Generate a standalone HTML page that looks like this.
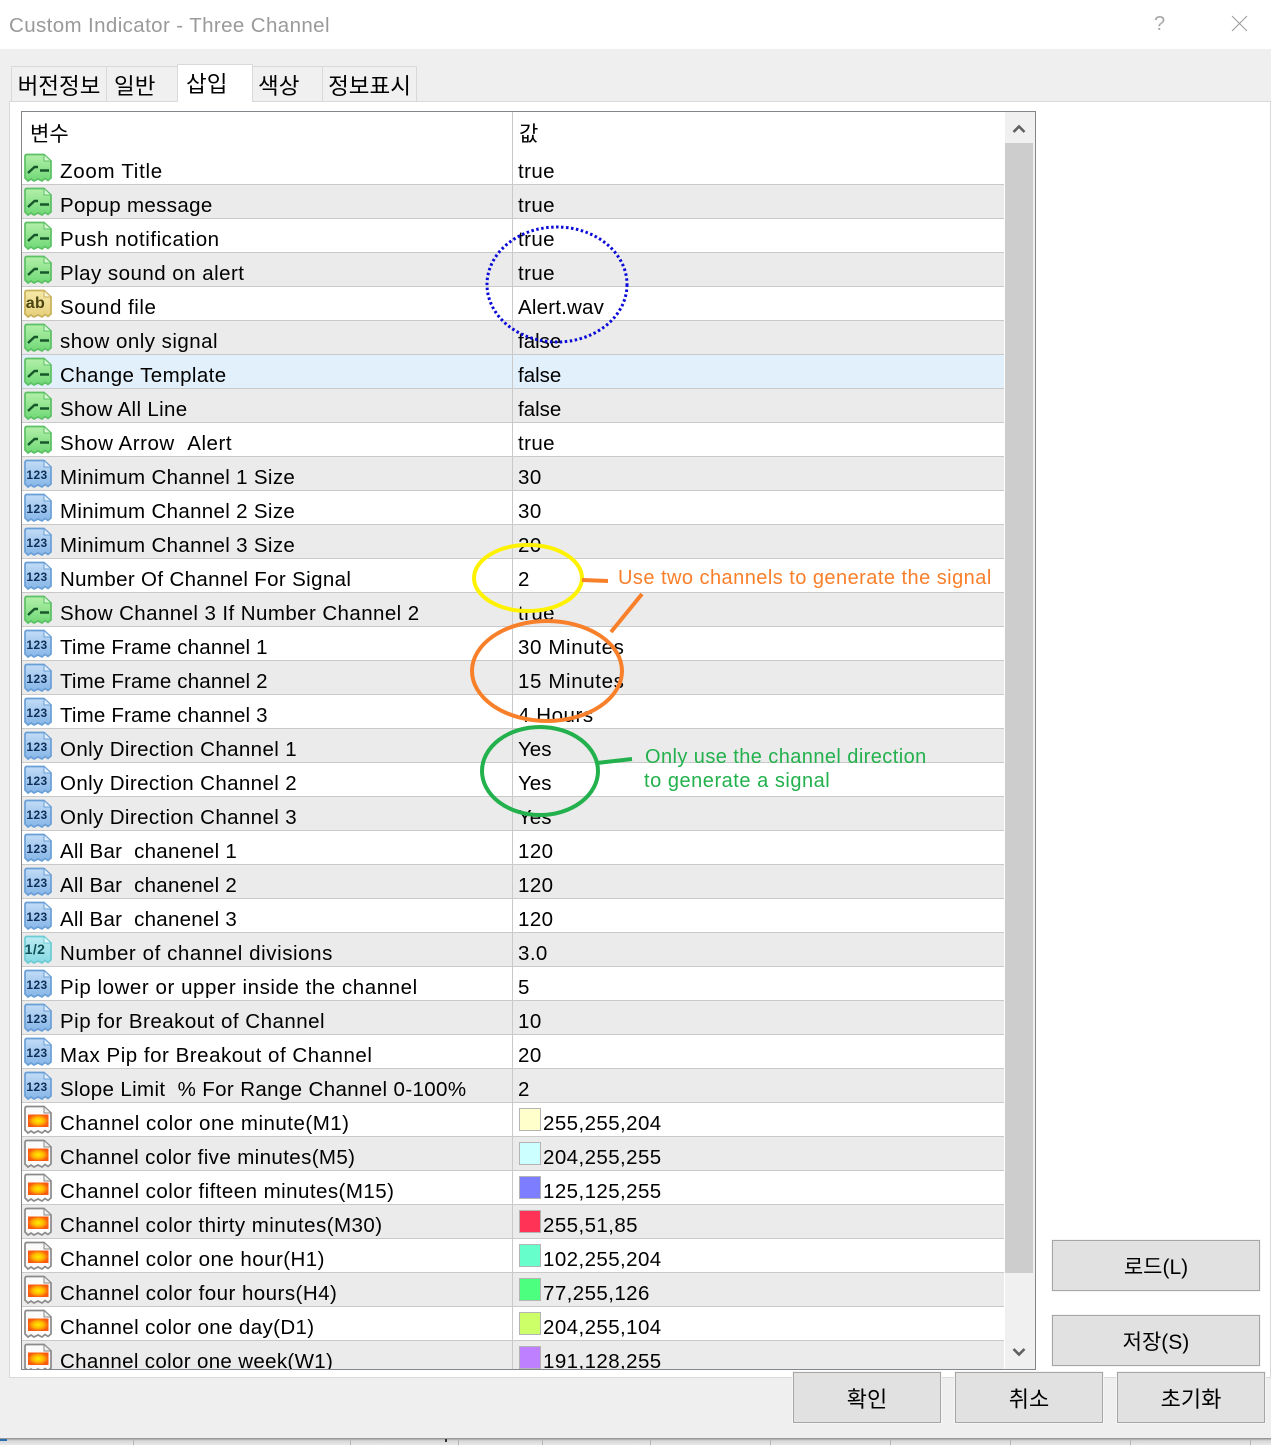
<!DOCTYPE html>
<html><head><meta charset="utf-8">
<style>
html,body{margin:0;padding:0;background:#fff}
body{width:1271px;height:1445px;position:relative;overflow:hidden;font-family:"Liberation Sans","Noto Sans CJK KR",sans-serif;color:#000}
.a{position:absolute}
.bg{left:0;top:49px;width:1271px;height:1389px;background:#efefef}
.shadow{left:0;top:1438px;width:1271px;height:7px;background:linear-gradient(#8a8a8a,#d8d8d8 40%,#e8e8e8)}
.tick{top:1440px;width:1px;height:5px;background:#b4b4b4}
.title{left:9px;top:13px;font-size:20.5px;line-height:26px;color:#9a9a9a;letter-spacing:.39px;white-space:nowrap}
.panel{left:9px;top:101px;width:1260px;height:1275px;background:#fff;border:1px solid #d9d9d9}
.tab{top:66px;height:35px;background:#f0f0f0;border:1px solid #d9d9d9;border-bottom:0;box-sizing:border-box;font-size:22.5px;line-height:40px;text-align:center;white-space:nowrap}
.tab.on{top:64px;height:38px;background:#fff;line-height:39px;z-index:2}
.grid{left:21px;top:111px;width:1013px;height:1257px;background:#fff;border:1px solid #82878c;overflow:hidden}
.hd{left:0;top:0;width:983px;height:39px;font-size:21px;line-height:46px}
.rows{left:0;top:39px;width:982px}
.r{position:relative;height:33px;border-bottom:1px solid #c9c9c9;background:#fff;font-size:20.5px;line-height:41px;white-space:nowrap;letter-spacing:.42px}
.r:nth-child(even){background:#ebebeb}
.r.sel{background:#e2f0fb}
.r svg{position:absolute;left:1px;top:2px;width:30px;height:30px}
.n{position:absolute;left:38px;top:0}
.v{position:absolute;left:496px;top:0}
.v.c{left:521px}
.sw{position:absolute;left:497px;top:5px;width:20px;height:21px;border:1px solid #b4b4b4}
.col{left:490px;top:0;width:1px;height:1257px;background:#c9c9c9}
.sb{left:983px;top:0;width:30px;height:1257px;background:#f0f0f0}
.th{left:0;top:31px;width:28px;height:1130px;background:#cdcdcd}
.btn{background:#e1e1e1;border:1px solid #a6a6a6;box-sizing:border-box;font-size:22px;text-align:center;line-height:54px;outline:1px solid #f5f5f5}
svg.o{position:absolute;left:0;top:0;width:1271px;height:1445px;z-index:5}
svg.o text{font-family:"Liberation Sans",sans-serif;font-size:20px;letter-spacing:.42px}
</style></head>
<body>
<svg width="0" height="0" style="position:absolute">
<defs>
<linearGradient id="gg" x1="0" y1="0" x2="0" y2="1"><stop offset="0" stop-color="#b4f0aa"/><stop offset="1" stop-color="#6fd876"/></linearGradient>
<linearGradient id="gb" x1="0" y1="0" x2="0" y2="1"><stop offset="0" stop-color="#c2dcf6"/><stop offset="1" stop-color="#86b6e8"/></linearGradient>
<linearGradient id="gy" x1="0" y1="0" x2="0" y2="1"><stop offset="0" stop-color="#f6e9a8"/><stop offset="1" stop-color="#e6d07c"/></linearGradient>
<linearGradient id="gt" x1="0" y1="0" x2="0" y2="1"><stop offset="0" stop-color="#bcecf2"/><stop offset="1" stop-color="#86dae2"/></linearGradient>
<radialGradient id="go"><stop offset="0" stop-color="#ffee00"/><stop offset=".55" stop-color="#ffb400"/><stop offset="1" stop-color="#f85a10"/></radialGradient>
<symbol id="g" viewBox="0 0 30 30"><path d="M2 3.500Q2 1.500 4 1.500H21L28 8V25L25 27.500 22 25.500 19 28 15 26 11 28 8 26 5 28 2 25Z" fill="url(#gg)" stroke="#5cc064" stroke-width="1.700"/><path d="M21 2V8H27.500" fill="#d8f7d2" stroke="#5cc064"/><path d="M5 20L11.500 14H15M17 17.500H26" fill="none" stroke="#17582a" stroke-width="2.400"/></symbol>
<symbol id="b" viewBox="0 0 30 30"><path d="M2 3.500Q2 1.500 4 1.500H21L28 8V25L25 27.500 22 25.500 19 28 15 26 11 28 8 26 5 28 2 25Z" fill="url(#gb)" stroke="#6a9fd6" stroke-width="1.700"/><path d="M21 2V8H27.500" fill="#e2effb" stroke="#6a9fd6"/><text x="14" y="20" text-anchor="middle" font-family="Liberation Sans" font-weight="700" font-size="12" fill="#0f2f58">123</text></symbol>
<symbol id="y" viewBox="0 0 30 30"><path d="M2 3.500Q2 1.500 4 1.500H21L28 8V25L25 27.500 22 25.500 19 28 15 26 11 28 8 26 5 28 2 25Z" fill="url(#gy)" stroke="#c9b05a" stroke-width="1.700"/><path d="M21 2V8H27.500" fill="#fbf5d8" stroke="#c9b05a"/><text x="12.500" y="19" text-anchor="middle" font-family="Liberation Sans" font-weight="700" font-size="16" fill="#4b4310">ab</text></symbol>
<symbol id="t" viewBox="0 0 30 30"><path d="M2 3.500Q2 1.500 4 1.500H21L28 8V25L25 27.500 22 25.500 19 28 15 26 11 28 8 26 5 28 2 25Z" fill="url(#gt)" stroke="#6ccbd3" stroke-width="1.700"/><path d="M21 2V8H27.500" fill="#e8fafb" stroke="#6ccbd3"/><text x="12" y="19" text-anchor="middle" font-family="Liberation Sans" font-weight="700" font-size="14" fill="#0f4f58">1/2</text></symbol>
<symbol id="c" viewBox="0 0 30 30"><path d="M2 3.500Q2 1.500 4 1.500H21L28 8V25L25 27.500 22 25.500 19 28 15 26 11 28 8 26 5 28 2 25Z" fill="#fbfbfb" stroke="#8a8a8a" stroke-width="1.700"/><path d="M21 2V8H27.500" fill="#f0f0f0" stroke="#8a8a8a"/><rect x="5" y="9.500" width="20.500" height="12.500" fill="url(#go)"/></symbol>
</defs>
</svg>

<div class="a bg"></div>
<div class="a shadow"></div>
<div class="a tick" style="left:133px"></div><div class="a tick" style="left:350px"></div><div class="a tick" style="left:458px"></div><div class="a tick" style="left:542px"></div><div class="a tick" style="left:650px"></div><div class="a tick" style="left:770px"></div><div class="a tick" style="left:890px"></div><div class="a tick" style="left:1010px"></div><div class="a tick" style="left:1130px"></div><div class="a tick" style="left:1250px"></div>
<div class="a" style="left:0;top:1439px;width:7px;height:2px;background:#2a6fb0"></div>
<div class="a" style="left:445px;top:1439px;width:2px;height:3px;background:#333"></div>
<div class="a title">Custom Indicator - Three Channel</div>
<div class="a" style="left:1154px;top:12px;font-size:20px;line-height:24px;color:#a8a8a8">?</div>
<svg class="a" style="left:1230px;top:14px" width="20" height="20"><path d="M2 2L17 17M17 2L2 17" stroke="#9a9a9a" stroke-width="1" fill="none"/></svg>

<div class="a panel"></div>
<div class="a tab" style="left:11px;width:96px">버전정보</div>
<div class="a tab" style="left:106px;width:72px;text-align:left;padding-left:7px">일반</div>
<div class="a tab on" style="left:177px;width:76px;text-align:left;padding-left:8px">삽입</div>
<div class="a tab" style="left:252px;width:71px;text-align:left;padding-left:5px">색상</div>
<div class="a tab" style="left:322px;width:95px">정보표시</div>

<div class="a grid">
<div class="a hd"><span class="a" style="left:8px;top:0">변수</span><span class="a" style="left:497px;top:0">값</span></div>
<div class="a rows">
<div class="r"><svg><use href="#g"/></svg><span class="n" style="letter-spacing:.72px">Zoom Title</span><span class="v">true</span></div>
<div class="r"><svg><use href="#g"/></svg><span class="n" style="letter-spacing:.34px">Popup message</span><span class="v">true</span></div>
<div class="r"><svg><use href="#g"/></svg><span class="n" style="letter-spacing:.54px">Push notification</span><span class="v">true</span></div>
<div class="r"><svg><use href="#g"/></svg><span class="n" style="letter-spacing:.47px">Play sound on alert</span><span class="v">true</span></div>
<div class="r"><svg><use href="#y"/></svg><span class="n" style="letter-spacing:.52px">Sound file</span><span class="v" style="letter-spacing:.2px">Alert.wav</span></div>
<div class="r"><svg><use href="#g"/></svg><span class="n" style="letter-spacing:.48px">show only signal</span><span class="v" style="letter-spacing:0">false</span></div>
<div class="r sel"><svg><use href="#g"/></svg><span class="n">Change Template</span><span class="v" style="letter-spacing:0">false</span></div>
<div class="r"><svg><use href="#g"/></svg><span class="n" style="letter-spacing:.34px">Show All Line</span><span class="v" style="letter-spacing:0">false</span></div>
<div class="r"><svg><use href="#g"/></svg><span class="n" style="letter-spacing:.54px">Show Arrow &nbsp;Alert</span><span class="v">true</span></div>
<div class="r"><svg><use href="#b"/></svg><span class="n" style="letter-spacing:.33px">Minimum Channel 1 Size</span><span class="v">30</span></div>
<div class="r"><svg><use href="#b"/></svg><span class="n" style="letter-spacing:.33px">Minimum Channel 2 Size</span><span class="v">30</span></div>
<div class="r"><svg><use href="#b"/></svg><span class="n" style="letter-spacing:.33px">Minimum Channel 3 Size</span><span class="v">20</span></div>
<div class="r"><svg><use href="#b"/></svg><span class="n" style="letter-spacing:.35px">Number Of Channel For Signal</span><span class="v">2</span></div>
<div class="r"><svg><use href="#g"/></svg><span class="n">Show Channel 3 If Number Channel 2</span><span class="v">true</span></div>
<div class="r"><svg><use href="#b"/></svg><span class="n" style="letter-spacing:.17px">Time Frame channel 1</span><span class="v" style="letter-spacing:.62px">30 Minutes</span></div>
<div class="r"><svg><use href="#b"/></svg><span class="n" style="letter-spacing:.17px">Time Frame channel 2</span><span class="v" style="letter-spacing:.62px">15 Minutes</span></div>
<div class="r"><svg><use href="#b"/></svg><span class="n" style="letter-spacing:.17px">Time Frame channel 3</span><span class="v" style="letter-spacing:.56px">4 Hours</span></div>
<div class="r"><svg><use href="#b"/></svg><span class="n" style="letter-spacing:.38px">Only Direction Channel 1</span><span class="v" style="letter-spacing:0">Yes</span></div>
<div class="r"><svg><use href="#b"/></svg><span class="n" style="letter-spacing:.38px">Only Direction Channel 2</span><span class="v" style="letter-spacing:0">Yes</span></div>
<div class="r"><svg><use href="#b"/></svg><span class="n" style="letter-spacing:.38px">Only Direction Channel 3</span><span class="v" style="letter-spacing:0">Yes</span></div>
<div class="r"><svg><use href="#b"/></svg><span class="n" style="letter-spacing:.26px">All Bar &nbsp;chanenel 1</span><span class="v">120</span></div>
<div class="r"><svg><use href="#b"/></svg><span class="n" style="letter-spacing:.26px">All Bar &nbsp;chanenel 2</span><span class="v">120</span></div>
<div class="r"><svg><use href="#b"/></svg><span class="n" style="letter-spacing:.26px">All Bar &nbsp;chanenel 3</span><span class="v">120</span></div>
<div class="r"><svg><use href="#t"/></svg><span class="n" style="letter-spacing:.57px">Number of channel divisions</span><span class="v">3.0</span></div>
<div class="r"><svg><use href="#b"/></svg><span class="n" style="letter-spacing:.55px">Pip lower or upper inside the channel</span><span class="v">5</span></div>
<div class="r"><svg><use href="#b"/></svg><span class="n" style="letter-spacing:.49px">Pip for Breakout of Channel</span><span class="v">10</span></div>
<div class="r"><svg><use href="#b"/></svg><span class="n" style="letter-spacing:.52px">Max Pip for Breakout of Channel</span><span class="v">20</span></div>
<div class="r"><svg><use href="#b"/></svg><span class="n" style="letter-spacing:.37px">Slope Limit &nbsp;% For Range Channel 0-100%</span><span class="v">2</span></div>
<div class="r"><svg><use href="#c"/></svg><span class="n" style="letter-spacing:.49px">Channel color one minute(M1)</span><i class="sw" style="background:rgb(255,255,204)"></i><span class="v c">255,255,204</span></div>
<div class="r"><svg><use href="#c"/></svg><span class="n" style="letter-spacing:.39px">Channel color five minutes(M5)</span><i class="sw" style="background:rgb(204,255,255)"></i><span class="v c">204,255,255</span></div>
<div class="r"><svg><use href="#c"/></svg><span class="n" style="letter-spacing:.45px">Channel color fifteen minutes(M15)</span><i class="sw" style="background:rgb(125,125,255)"></i><span class="v c">125,125,255</span></div>
<div class="r"><svg><use href="#c"/></svg><span class="n" style="letter-spacing:.45px">Channel color thirty minutes(M30)</span><i class="sw" style="background:rgb(255,51,85)"></i><span class="v c">255,51,85</span></div>
<div class="r"><svg><use href="#c"/></svg><span class="n" style="letter-spacing:.46px">Channel color one hour(H1)</span><i class="sw" style="background:rgb(102,255,204)"></i><span class="v c">102,255,204</span></div>
<div class="r"><svg><use href="#c"/></svg><span class="n" style="letter-spacing:.46px">Channel color four hours(H4)</span><i class="sw" style="background:rgb(77,255,126)"></i><span class="v c">77,255,126</span></div>
<div class="r"><svg><use href="#c"/></svg><span class="n" style="letter-spacing:.38px">Channel color one day(D1)</span><i class="sw" style="background:rgb(204,255,104)"></i><span class="v c">204,255,104</span></div>
<div class="r"><svg><use href="#c"/></svg><span class="n" style="letter-spacing:.34px">Channel color one week(W1)</span><i class="sw" style="background:rgb(191,128,255)"></i><span class="v c">191,128,255</span></div>
</div>
<div class="a col"></div>
<div class="a sb">
<div class="a th"></div>
<svg class="a" style="left:7px;top:11px" width="14" height="12"><path d="M1.500 9L7 3.500 12.500 9" fill="none" stroke="#606060" stroke-width="2.600"/></svg>
<svg class="a" style="left:7px;top:1234px" width="14" height="12"><path d="M1.500 3L7 8.500 12.500 3" fill="none" stroke="#606060" stroke-width="2.600"/></svg>
</div>
</div>

<div class="a btn" style="left:1052px;top:1240px;width:208px;height:51px;font-size:21px">로드(L)</div>
<div class="a btn" style="left:1052px;top:1315px;width:208px;height:51px;font-size:21px">저장(S)</div>
<div class="a btn" style="left:793px;top:1372px;width:148px;height:51px">확인</div>
<div class="a btn" style="left:955px;top:1372px;width:148px;height:51px">취소</div>
<div class="a btn" style="left:1117px;top:1372px;width:148px;height:51px">초기화</div>

<svg class="o" viewBox="0 0 1271 1445">
<ellipse cx="557" cy="284.500" rx="70" ry="57.500" fill="none" stroke="#0b0bd8" stroke-width="3" stroke-dasharray="2.500 2.500"/>
<ellipse cx="528" cy="578" rx="54" ry="33" fill="none" stroke="#fff200" stroke-width="4"/>
<ellipse cx="547" cy="671" rx="75" ry="50" fill="none" stroke="#f9802a" stroke-width="4"/>
<ellipse cx="540" cy="771" rx="58" ry="44" fill="none" stroke="#22b14c" stroke-width="4"/>
<path d="M582 580L608 581M611 632L642 594" stroke="#f9802a" stroke-width="4" fill="none"/>
<path d="M597 763L632 759" stroke="#22b14c" stroke-width="4" fill="none"/>
<text x="618" y="584" fill="#fa7f2a" style="letter-spacing:.46px">Use two channels to generate the signal</text>
<text x="645" y="763" fill="#22b14c">Only use the channel direction</text>
<text x="644" y="787" fill="#22b14c" style="letter-spacing:.53px">to generate a signal</text>
</svg>
</body></html>
